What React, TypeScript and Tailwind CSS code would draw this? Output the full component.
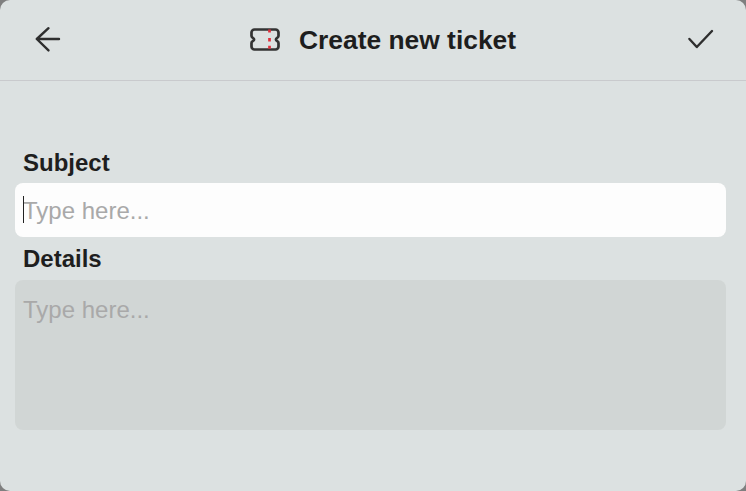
export default function App() {
  return (
    <div className="h-[491px] w-[746px] bg-[#7f7f7f] font-['Liberation_Sans',Arial,sans-serif]">
      <div className="flex h-full flex-col rounded-[10px] bg-[#dce1e1] text-[#1e1e1e]">
        {/* Header */}
        <header className="flex h-[81px] shrink-0 items-center justify-between border-b border-[#c9cacd] pl-[33px] pr-[29px]">
          <button className="flex h-[30px] w-[46px] items-center justify-start">
            <svg width="30" height="30" viewBox="0 0 30 30" fill="none" stroke="#2e2e2e" strokeWidth="2.4" strokeLinecap="round" strokeLinejoin="round">
              <path d="M26 14H3.8M15.5 3.2L3.8 14l11.7 11.4" />
            </svg>
          </button>
          <div className="flex items-center gap-[19px]">
            <svg width="30" height="24" viewBox="0 0 30 24" fill="none" strokeWidth="2.7" strokeLinecap="round" strokeLinejoin="round">
              <path stroke="#333" d="M4.5 1.5h21a3 3 0 0 1 3 3v3.6c0 .9-.6 1.3-1.3 1.7-1.7 1-1.7 2.4 0 3.4.7.4 1.3.8 1.3 1.7v3.6a3 3 0 0 1-3 3h-21a3 3 0 0 1-3-3v-3.6c0-.9.6-1.3 1.3-1.7 1.7-1 1.7-2.4 0-3.4-.7-.4-1.3-.8-1.3-1.7V4.5a3 3 0 0 1 3-3z" />
              <path stroke="#e0303c" strokeLinecap="butt" d="M19.5 1.5v3M19.5 10v3.4M19.5 17.8v3" />
            </svg>
            <h1 className="text-[26.4px] font-bold leading-none">Create new ticket</h1>
          </div>
          <button className="flex h-[30px] w-[30px] items-center justify-center">
            <svg width="30" height="30" viewBox="0 0 30 30" fill="none" stroke="#2e2e2e" strokeWidth="2.4" strokeLinecap="round" strokeLinejoin="round">
              <path d="M2.4 14l7.4 8L25 6" />
            </svg>
          </button>
        </header>

        {/* Form */}
        <main className="flex flex-col pl-[15px] pr-[20px] pt-[68px]">
          <label className="pl-2 text-[24px] font-bold leading-[28px]">Subject</label>
          <div className="relative mt-[6px]">
            <input
              placeholder="Type here..."
              className="h-[54px] w-full rounded-lg bg-[#fdfdfd] px-2 pt-[2px] text-[24px] outline-none placeholder:text-[#a9a9a9]"
            />
            <span className="absolute left-2 top-[13px] h-[27px] w-px bg-[#222]" />
          </div>
          <label className="mt-2 pl-2 text-[24px] font-bold leading-[28px]">Details</label>
          <textarea
            placeholder="Type here..."
            className="mt-[7px] h-[150px] w-full resize-none rounded-lg bg-[#d1d6d5] px-2 py-4 text-[24px] leading-[28px] outline-none placeholder:text-[#a9a9a9]"
          />
        </main>
      </div>
    </div>
  );
}
